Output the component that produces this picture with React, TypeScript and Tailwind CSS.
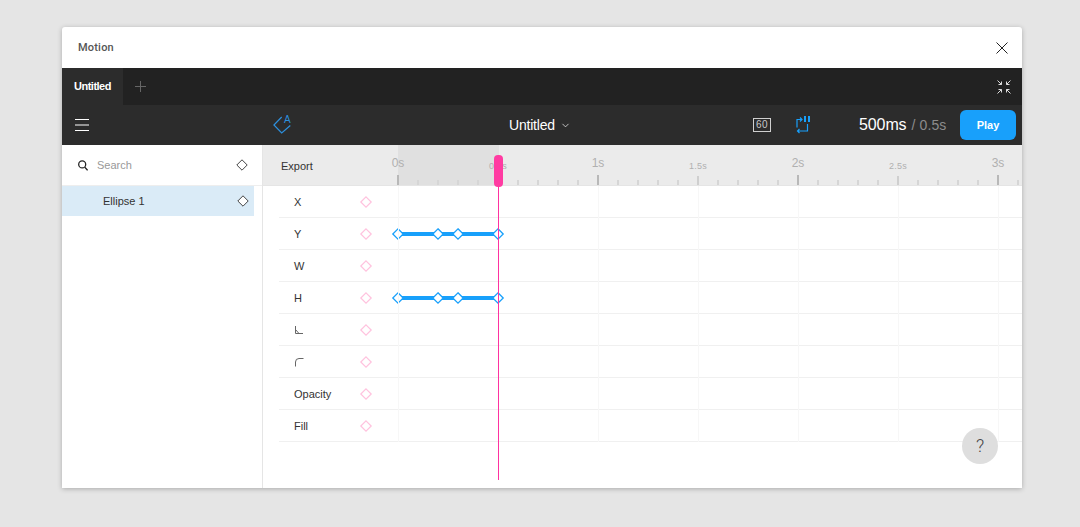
import { ChevronDown } from 'lucide-react';

const font = "font-['Liberation_Sans',_Roboto,_sans-serif]";

const rows = ['X', 'Y', 'W', 'H', 'corner', 'radius', 'Opacity', 'Fill'];
const keyed = ['Y', 'H'];
const keyframes = [0, 40, 60, 100];
const majors = [
  { at: 0, label: '0s' },
  { at: 200, label: '1s' },
  { at: 400, label: '2s' },
  { at: 600, label: '3s' },
];
const minors = [
  { at: 100, label: '0.5s' },
  { at: 300, label: '1.5s' },
  { at: 500, label: '2.5s' },
];

function Diamond({ color, weight = 1 }: { color: string; weight?: number }) {
  return (
    <svg width="14" height="14" viewBox="0 0 14 14" fill="none">
      <path d="M7 1.8 12.2 7 7 12.2 1.8 7Z" fill="#fff" stroke={color} strokeWidth={weight} />
    </svg>
  );
}

function RowLabel({ name }: { name: string }) {
  if (name === 'corner') {
    return (
      <svg width="10" height="10" viewBox="0 0 10 10" fill="none" stroke="#666" strokeWidth="1">
        <path d="M1.5 1v7.5H9" />
        <path d="M1.5 4.5 5 8.5" />
      </svg>
    );
  }
  if (name === 'radius') {
    return (
      <svg width="10" height="10" viewBox="0 0 10 10" fill="none" stroke="#666" strokeWidth="1">
        <path d="M1.5 9.5V5a3.5 3.5 0 0 1 3.5-3.5h4.5" />
      </svg>
    );
  }
  return <span className="pt-[2px]">{name}</span>;
}

function Ruler() {
  const ticks = Array.from({ length: 32 }, (_, i) => i);
  return (
    <div className="absolute inset-0 overflow-hidden">
      <div className="absolute left-[135px] top-0 w-[101px] h-[40px] bg-[#e0e0e0]" />
      {ticks.map((i) => {
        const major = i % 10 === 0;
        const mid = i % 5 === 0;
        return (
          <div
            key={i}
            className="absolute bottom-0 w-[2px]"
            style={{
              left: 134 + i * 20,
              height: major ? 10 : mid ? 9 : 5,
              backgroundColor: major ? '#b8b8b8' : mid ? '#cfcfcf' : '#d6d6d6',
            }}
          />
        );
      })}
      {majors.map((m) => (
        <span
          key={m.label}
          className="absolute top-[10px] -translate-x-1/2 text-[12px] leading-[16px] text-[#b0b0b0]"
          style={{ left: 135 + m.at }}
        >
          {m.label}
        </span>
      ))}
      {minors.map((m) => (
        <span
          key={m.label}
          className="absolute top-[15px] -translate-x-1/2 text-[9px] leading-[12px] text-[#b0b0b0] tracking-[0.3px]"
          style={{ left: 135 + m.at }}
        >
          {m.label}
        </span>
      ))}
    </div>
  );
}

function Row({ name }: { name: string }) {
  const hasKeys = keyed.includes(name);
  return (
    <div className="relative flex items-center h-[32px] border-b border-[#f0f0f0] text-[11px] text-[#333]">
      <div className="w-[66px] pl-[15px] flex items-center">
        <RowLabel name={name} />
      </div>
      <div className="w-[54px] flex items-center pl-[14px]">
        <Diamond color="#ffc2de" weight={1.2} />
      </div>
      {hasKeys && (
        <div className="absolute left-[119px] top-[14px] w-[100px] h-[4px] bg-[#18a0fb]">
          {keyframes.map((k) => (
            <div key={k} className="absolute -top-[5px] -ml-[7px] flex" style={{ left: k }}>
              <Diamond color="#18a0fb" weight={1.3} />
            </div>
          ))}
        </div>
      )}
    </div>
  );
}

export default function App() {
  const gridLines = Array.from({ length: 7 }, (_, i) => i);

  return (
    <div className={`h-[527px] bg-[#e5e5e5] overflow-hidden pt-[27px] pl-[62px] ${font}`}>
      <div className="w-[960px] h-[461px] bg-white rounded-t-[3px] flex flex-col overflow-hidden shadow-[0_1px_5px_rgba(0,0,0,0.25)]">
        {/* Title */}
        <div className="h-[41px] shrink-0 flex items-center justify-between pl-[16px] pr-[14px]">
          <span className="pt-[2px] text-[11px] font-['Roboto'] font-medium text-[#555] tracking-[0.2px]">Motion</span>
          <svg width="12" height="12" viewBox="0 0 12 12" fill="none" stroke="#222" strokeWidth="1">
            <path d="M.5.5l11 11M11.5.5l-11 11" />
          </svg>
        </div>

        {/* Tabs */}
        <div className="h-[37px] shrink-0 bg-[#222222] flex items-center">
          <div className="w-[61px] h-full bg-[#2c2c2c] pl-[12px] flex items-center text-[11px] font-bold text-white tracking-[-0.5px]">
            Untitled
          </div>
          <svg className="ml-[12px]" width="11" height="11" viewBox="0 0 11 11" fill="none" stroke="#666" strokeWidth="1">
            <path d="M5.5 0v11M0 5.5h11" />
          </svg>
          <svg className="ml-auto mr-[11px]" width="14" height="14" viewBox="0 0 14 14" fill="none" stroke="#ddd" strokeWidth="1">
            <path d="M.5.5l4 4M4.5 1.5v3h-3" />
            <path d="M13.5.5l-4 4M9.5 1.5v3h3" />
            <path d="M.5 13.5l4-4M4.5 12.5v-3h-3" />
            <path d="M13.5 13.5l-4-4M9.5 12.5v-3h3" />
          </svg>
        </div>

        {/* Toolbar */}
        <div className="relative h-[40px] shrink-0 bg-[#2c2c2c] flex items-center text-white">
          <svg className="ml-[13px]" width="14" height="12" viewBox="0 0 14 12" fill="none" stroke="#fff" strokeWidth="1">
            <path d="M0 .5h14M0 6h14M0 11.5h14" />
          </svg>
          <svg className="ml-[184px] -mt-[1px]" width="19" height="20" viewBox="0 0 19 20" fill="none" stroke="#2d8fdc" strokeWidth="1.2">
            <path d="M8.7 2 .9 10l7.8 8 8.6-7.5" />
            <text x="11" y="8" fontSize="10" fill="#2d8fdc" stroke="none">A</text>
          </svg>
          <div className="absolute left-[447px] top-0 h-full flex items-center gap-[5px] text-[14px]">
            <span className="tracking-[-0.2px]">Untitled</span>
            <ChevronDown className="w-[11px] h-[11px]" strokeWidth={1.5} />
          </div>
          <div className="ml-auto flex items-center">
            <div className="w-[18px] h-[14px] border border-[#d0d0d0] flex items-center justify-center text-[10px] leading-none text-[#c8c8c8] tracking-[0.5px]">60</div>
            <svg className="ml-[25px]" width="14" height="18" viewBox="0 0 14 18" fill="none" stroke="#18a0fb" strokeWidth="1.2">
              <path d="M1 11.5V3.5h5M4 1.5l2 2-2 2" />
              <path d="M11.5 8v7H1.5M3.5 13l-2 2 2 2" />
              <path d="M9 0v6M13 0v6" strokeWidth="2" />
            </svg>
            <div className="ml-[49px] flex items-baseline gap-[5px] w-[87px] whitespace-nowrap">
              <span className="text-[16px] tracking-[-0.1px]">500ms</span>
              <span className="text-[14px] text-[#8c8c8c] tracking-[0.1px]">/ 0.5s</span>
            </div>
            <button className="ml-[14px] mr-[6px] w-[56px] h-[30px] rounded-[6px] bg-[#18a0fb] text-[11px] font-bold text-white">Play</button>
          </div>
        </div>

        {/* Body */}
        <div className="relative flex-1 flex min-h-0">
          <aside className="w-[201px] shrink-0 border-r border-[#e5e5e5]">
            <div className="h-[41px] flex items-center pl-[16px] pr-[13px] border-b border-[#eeeeee]">
              <svg width="10" height="11" viewBox="0 0 10 11" fill="none" stroke="#222" strokeWidth="1.3">
                <circle cx="4.2" cy="4.4" r="3.5" />
                <path d="M6.8 7.2 9.6 10.4" />
              </svg>
              <span className="ml-[9px] text-[11px] text-[#999]">Search</span>
              <div className="ml-auto flex">
                <Diamond color="#444" />
              </div>
            </div>
            <div className="w-[192px] h-[30px] bg-[#daebf7] flex items-center pl-[41px] pr-[4px] text-[11px] text-[#333]">
              Ellipse 1
              <div className="ml-auto flex">
                <Diamond color="#444" />
              </div>
            </div>
          </aside>

          <div className="relative flex-1 min-w-0">
            <div className="relative h-[41px] bg-[#ebebeb] border-b border-[#e5e5e5] flex items-center">
              <Ruler />
              <span className="relative pl-[18px] pt-[2px] text-[11px] text-[#333]">Export</span>
            </div>
            <div className="ml-[16px]">
              {rows.map((r) => (
                <Row key={r} name={r} />
              ))}
            </div>

            {/* grid lines */}
            {gridLines.map((i) => (
              <div
                key={i}
                className="absolute top-[41px] h-[256px] w-px bg-[#f7f7f7]"
                style={{ left: 135 + i * 100 }}
              />
            ))}

            {/* playhead */}
            <div className="absolute left-[235px] top-[41px] h-[294px] w-px bg-[#ff32a0]" />
            <div className="absolute left-[231px] top-[10px] w-[9px] h-[32px] rounded-[4px] bg-[#ff3ba2]" />

            {/* help */}
            <div className="absolute right-[24px] top-[283px] w-[36px] h-[36px] rounded-full bg-[#dedede] flex items-center justify-center pb-[2px] text-[18px] text-[#444] font-['Roboto'] font-light">
              ?
            </div>
          </div>
        </div>
      </div>
    </div>
  );
}
